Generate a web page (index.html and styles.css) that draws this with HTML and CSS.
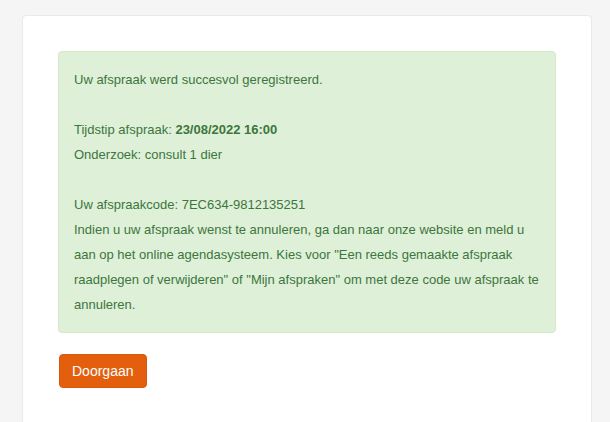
FILE: index.html
```html
<!DOCTYPE html>
<html lang="nl">
<head>
<meta charset="utf-8">
<title>Afspraak geregistreerd</title>
<link rel="stylesheet" href="styles.css">
</head>
<body>
<div class="page">
  <div class="card">
    <div class="alert">
      <p>Uw afspraak werd succesvol geregistreerd.</p>
      <p class="blank">&nbsp;</p>
      <p>Tijdstip afspraak: <strong>23/08/2022 16:00</strong></p>
      <p>Onderzoek: consult 1 dier</p>
      <p class="blank">&nbsp;</p>
      <p>Uw afspraakcode: 7EC634-9812135251</p>
      <p>Indien u uw afspraak wenst te annuleren, ga dan naar onze website en meld u aan op het online agendasysteem. Kies voor "Een reeds gemaakte afspraak raadplegen of verwijderen" of "Mijn afspraken" om met deze code uw afspraak te annuleren.</p>
    </div>
    <div class="actions">
      <button class="btn" type="button">Doorgaan</button>
    </div>
  </div>
</div>
</body>
</html>
```

FILE: styles.css
```css
html, body {
  margin: 0;
  padding: 0;
  background: #f5f5f5;
  font-family: "Liberation Sans", Arial, sans-serif;
  height: 100%;
}
.page {
  padding: 15px 0 0 22px;
}
.card {
  box-sizing: border-box;
  width: 570px;
  min-height: 420px;
  background: #ffffff;
  border: 1px solid #e9e9e9;
  border-radius: 4px;
  padding: 35px;
}
.alert {
  background: #dff0d8;
  border: 1px solid #d6e9c6;
  border-radius: 4px;
  color: #3c763d;
  padding: 15px;
  font-size: 13px;
  line-height: 25px;
  margin-bottom: 21px;
}
.alert p {
  margin: 0;
}
.alert strong {
  font-weight: bold;
}
.actions {
  padding-left: 1px;
}
.btn {
  display: inline-block;
  background: #e35f0e;
  color: #ffffff;
  border: 1px solid #d9580b;
  border-radius: 4px;
  padding: 6px 12px;
  font-family: "Liberation Sans", Arial, sans-serif;
  font-size: 14px;
  line-height: 20px;
  cursor: pointer;
}
```
